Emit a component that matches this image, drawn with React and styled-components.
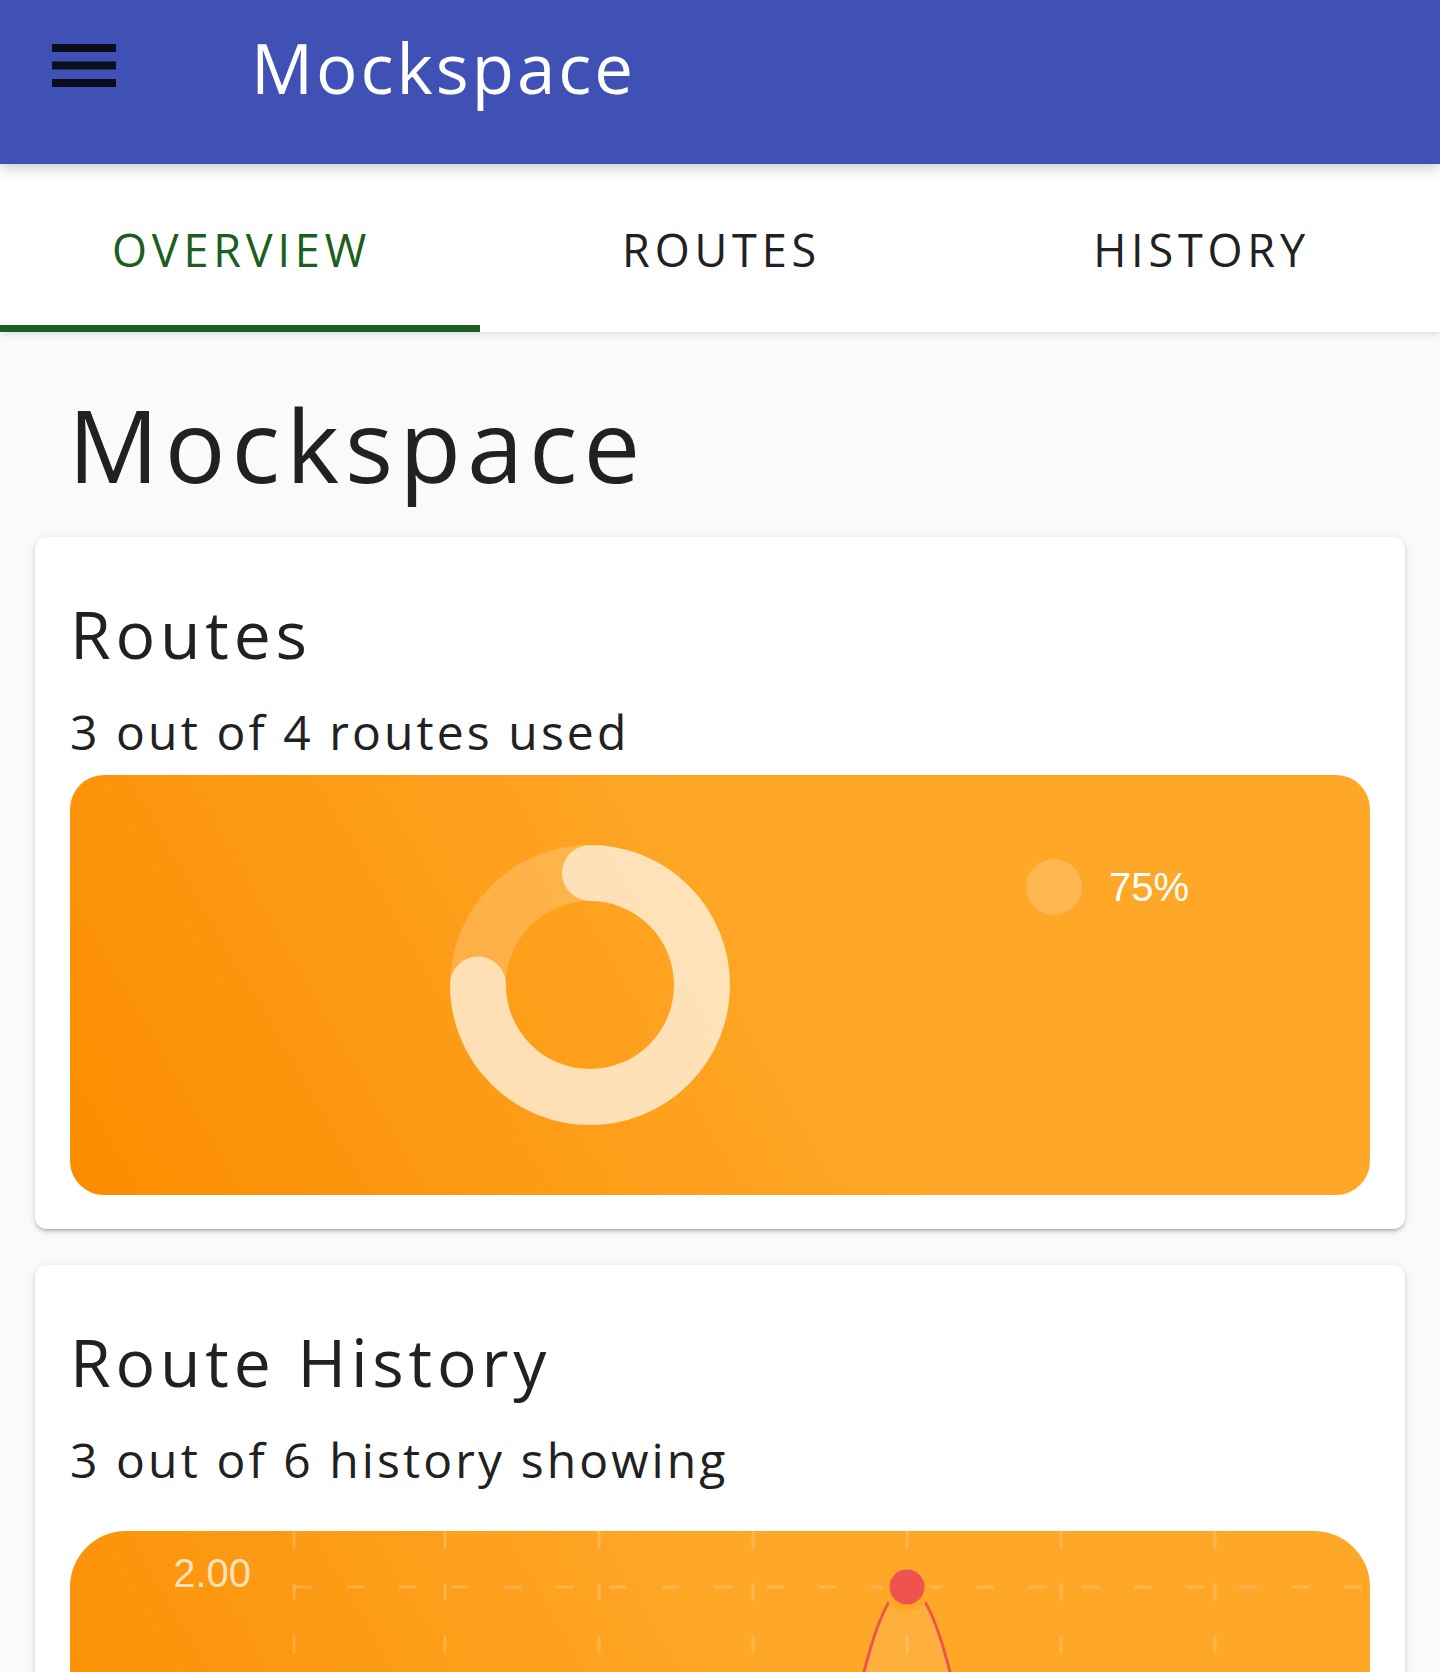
import React from "react";
import styled, { createGlobalStyle } from "styled-components";

const GlobalStyle = createGlobalStyle`
  html, body { margin: 0; padding: 0; }
  body {
    background: #fafafa;
    font-family: "Open Sans", "Noto Sans", sans-serif;
    color: #212121;
  }
  * { box-sizing: border-box; }
`;

const Page = styled.div`
  min-height: 1672px;
  background: #fafafa;
`;

const AppBar = styled.header`
  position: relative;
  z-index: 3;
  height: 164px;
  background: #3f51b5;
  display: flex;
  align-items: flex-start;
  padding-left: 52px;
  box-shadow: 0 4px 12px rgba(0, 0, 0, 0.2);
`;

const MenuButton = styled.button`
  margin-top: 44px;
  padding: 0;
  border: 0;
  background: none;
  width: 64px;
  height: 43px;
  display: block;
  cursor: pointer;
`;

const AppTitle = styled.h1`
  margin: 33px 0 0 135px;
  font-size: 69px;
  line-height: 1;
  font-weight: 500;
  color: #ffffff;
  letter-spacing: 3px;
`;

const TabBar = styled.nav`
  position: relative;
  z-index: 2;
  display: flex;
  background: #ffffff;
  box-shadow: 0 3px 7px rgba(0, 0, 0, 0.1);
`;

const Tab = styled.button`
  flex: 1;
  height: 168px;
  padding: 63px 0 0 3px;
  border: 0;
  border-bottom: 7px solid ${(p) => (p.$active ? "#1b5e20" : "transparent")};
  background: none;
  font-family: inherit;
  font-size: 45px;
  line-height: 1;
  font-weight: 500;
  letter-spacing: 4.8px;
  text-transform: uppercase;
  color: ${(p) => (p.$active ? "#1b5e20" : "#212121")};
  display: flex;
  justify-content: center;
  align-items: flex-start;
  cursor: pointer;
`;

const Content = styled.main`
  padding: 0 35px 40px;
`;

const PageTitle = styled.h2`
  margin: 62px 0 0 33px;
  font-size: 101px;
  line-height: 1;
  font-weight: 500;
  letter-spacing: 6px;
`;

const Card = styled.section`
  margin-top: ${(p) => p.$gap}px;
  background: #ffffff;
  border-radius: 12px;
  padding: 63px 35px 34px;
  box-shadow: 0 3px 3px -2px rgba(0, 0, 0, 0.2), 0 3px 4px 0 rgba(0, 0, 0, 0.12),
    0 1px 8px 0 rgba(0, 0, 0, 0.1);
`;

const CardTitle = styled.h3`
  margin: 0;
  font-size: 66px;
  line-height: 1;
  font-weight: 500;
  letter-spacing: 4.8px;
`;

const CardSubtitle = styled.p`
  margin: 42px 0 0;
  font-size: 48px;
  line-height: 1;
  font-weight: 500;
  letter-spacing: 3.1px;
`;

const ChartPanel = styled.div`
  margin-top: ${(p) => p.$offset}px;
  height: 420px;
  border-radius: ${(p) => p.$radius}px;
  background: linear-gradient(60deg, #fb8c00 0%, #ffa726 55%, #ffa726 100%);
  overflow: hidden;
  display: flex;
  align-items: center;
  padding-left: ${(p) => p.$inset || 0}px;
`;

const Donut = styled.svg`
  width: 280px;
  height: 280px;
  flex: none;
  display: block;
`;

const Legend = styled.ul`
  list-style: none;
  margin: 84px 0 0 296px;
  padding: 0;
  align-self: flex-start;
`;

const LegendItem = styled.li`
  display: flex;
  align-items: center;
  gap: 27px;
  font-family: "Liberation Sans", Arial, sans-serif;
  font-size: 40px;
  line-height: 1;
  color: #ffffff;
`;

const Swatch = styled.span`
  width: 56px;
  height: 56px;
  border-radius: 50%;
  background: rgba(255, 255, 255, 0.2);
`;

const LineChart = styled.svg`
  width: 100%;
  height: 420px;
  display: block;
`;

function MenuIcon() {
  return (
    <svg width="64" height="43" viewBox="0 0 64 43">
      <rect x="0" y="0" width="64" height="8" fill="#0b0d1c" />
      <rect x="0" y="17.5" width="64" height="8" fill="#0b0d1c" />
      <rect x="0" y="35" width="64" height="8" fill="#0b0d1c" />
    </svg>
  );
}

function UsageDonut({ value }) {
  const r = 112;
  const c = 2 * Math.PI * r;
  return (
    <Donut viewBox="0 0 280 280">
      <circle cx="140" cy="140" r={r} fill="none" stroke="rgba(255,255,255,0.2)" strokeWidth="56" />
      <circle
        cx="140"
        cy="140"
        r={r}
        fill="none"
        stroke="rgba(255,255,255,0.6)"
        strokeWidth="56"
        strokeLinecap="round"
        strokeDasharray={`${c * value} ${c}`}
        transform="rotate(-90 140 140)"
      />
    </Donut>
  );
}

function HistoryChart() {
  const gridX = [224, 375, 529, 683, 837, 991, 1145];
  const peakX = 837;
  const peakY = 56;
  const half = 83.9;
  const base = 380;
  const curve = `M ${peakX - half} ${base} Q ${peakX - half / 2} ${peakY} ${peakX} ${peakY} Q ${
    peakX + half / 2
  } ${peakY} ${peakX + half} ${base}`;
  return (
    <LineChart viewBox="0 0 1300 420" preserveAspectRatio="none">
      {gridX.map((x) => (
        <line
          key={x}
          x1={x}
          y1="0"
          x2={x}
          y2="420"
          stroke="rgba(255,255,255,0.2)"
          strokeWidth="3"
          strokeDasharray="17.5 35"
        />
      ))}
      <line
        x1="224"
        y1={peakY}
        x2="1300"
        y2={peakY}
        stroke="rgba(255,255,255,0.2)"
        strokeWidth="3"
        strokeDasharray="17.5 35"
      />
      <text
        x="181"
        y="56"
        textAnchor="end"
        fontFamily="'Liberation Sans', Arial, sans-serif"
        fontSize="40"
        fill="rgba(255,255,255,0.72)"
      >
        2.00
      </text>
      <path d={`${curve} L ${peakX + half} 420 L ${peakX - half} 420 Z`} fill="rgba(255,255,255,0.1)" />
      <path d={`M 224 ${base} L ${peakX - half} ${base}`} stroke="#ef5350" strokeWidth="3.5" fill="none" />
      <path d={`M ${peakX + half} ${base} L 1300 ${base}`} stroke="#ef5350" strokeWidth="3.5" fill="none" />
      <path d={curve} stroke="#ef5350" strokeWidth="3.5" fill="none" />
      <circle cx={peakX} cy={peakY} r="24" fill="#ffa726" />
      <circle cx={peakX} cy={peakY} r="17.5" fill="#ef5350" />
    </LineChart>
  );
}

export default function App() {
  const tabs = ["Overview", "Routes", "History"];
  return (
    <Page>
      <GlobalStyle />
      <AppBar>
        <MenuButton aria-label="Menu">
          <MenuIcon />
        </MenuButton>
        <AppTitle>Mockspace</AppTitle>
      </AppBar>
      <TabBar>
        {tabs.map((t, i) => (
          <Tab key={t} $active={i === 0}>
            {t}
          </Tab>
        ))}
      </TabBar>
      <Content>
        <PageTitle>Mockspace</PageTitle>
        <Card $gap={42}>
          <CardTitle>Routes</CardTitle>
          <CardSubtitle>3 out of 4 routes used</CardSubtitle>
          <ChartPanel $offset={19} $radius={34} $inset={380}>
            <UsageDonut value={0.75} />
            <Legend>
              <LegendItem>
                <Swatch />
                75%
              </LegendItem>
            </Legend>
          </ChartPanel>
        </Card>
        <Card $gap={36}>
          <CardTitle>Route History</CardTitle>
          <CardSubtitle>3 out of 6 history showing</CardSubtitle>
          <ChartPanel $offset={47} $radius={56}>
            <HistoryChart />
          </ChartPanel>
        </Card>
      </Content>
    </Page>
  );
}
